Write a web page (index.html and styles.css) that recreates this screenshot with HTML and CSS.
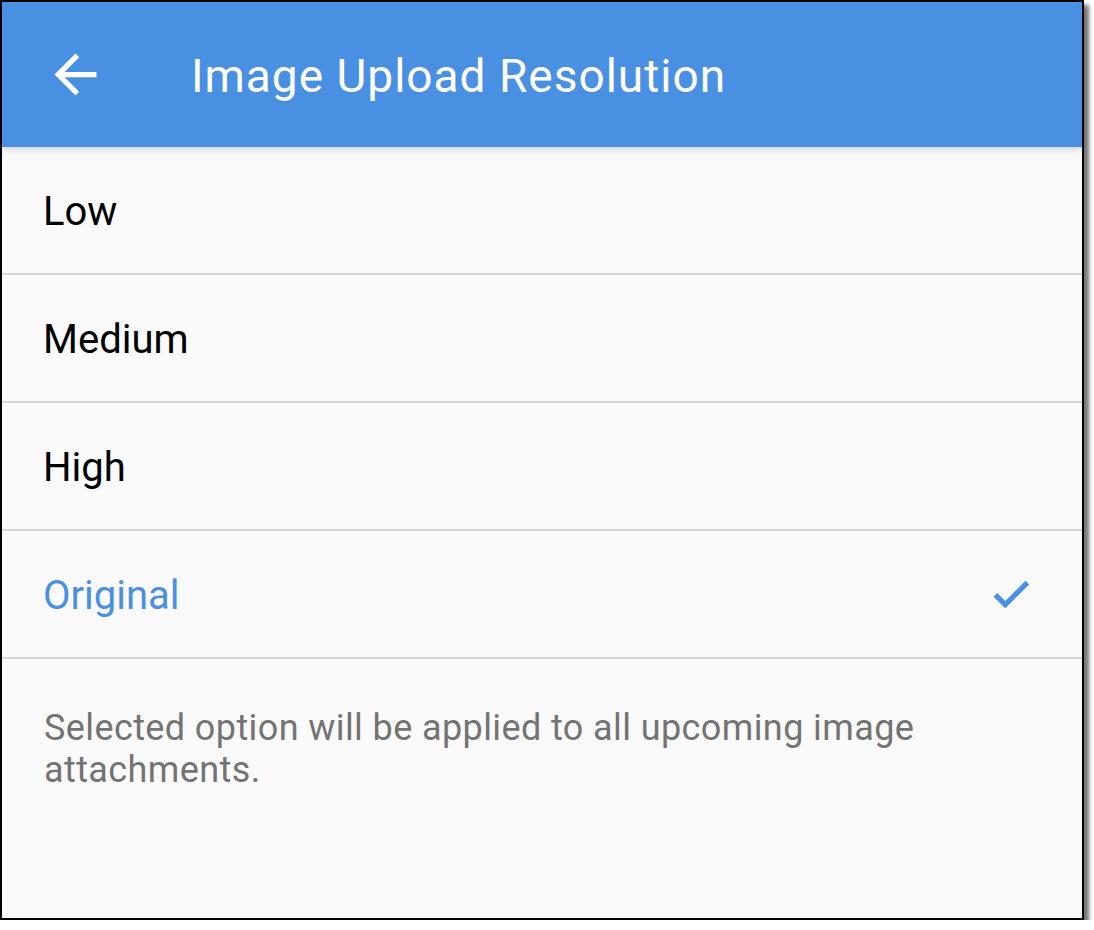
FILE: index.html
```html
<!DOCTYPE html>
<html>
<head>
<meta charset="utf-8">
<link rel="stylesheet" href="styles.css">
</head>
<body>
<div class="frame">
  <header class="appbar">
    <svg class="back" viewBox="0 0 24 24" width="63" height="63"><path fill="#fff" d="M20 11H7.83l5.59-5.59L12 4l-8 8 8 8 1.41-1.41L7.83 13H20v-2z"/></svg>
    <h1 class="title">Image Upload Resolution</h1>
  </header>
  <ul class="options">
    <li class="option">Low</li>
    <li class="option">Medium</li>
    <li class="option">High</li>
    <li class="option selected">Original
      <svg class="check" viewBox="0 0 24 24" width="46" height="46"><path fill="#4a90e2" stroke="#4a90e2" stroke-width="0.7" stroke-linejoin="miter" d="M9 16.17L4.83 12l-1.42 1.41L9 19 21 7l-1.41-1.41z"/></svg>
    </li>
  </ul>
  <p class="note">Selected option will be applied to all upcoming image attachments.</p>
</div>
</body>
</html>
```
FILE: styles.css
```css
html, body {
  margin: 0;
  padding: 0;
  background: #ffffff;
}
body {
  font-family: Roboto, "Noto Sans", sans-serif;
}
.frame {
  width: 1080px;
  height: 916px;
  border: 2px solid #000;
  background: #fafafa;
  box-shadow: 5px 5px 4px rgba(0,0,0,0.55);
  display: flex;
  flex-direction: column;
  overflow: hidden;
}
.appbar {
  height: 145px;
  flex: none;
  background: #4a90e2;
  display: flex;
  align-items: center;
  padding-left: 42px;
  box-shadow: 0 2px 7px rgba(0,0,0,0.18);
  position: relative;
  z-index: 1;
}
.back {
  display: block;
  flex: none;
}
.title {
  margin: 0 0 0 84px;
  color: #fff;
  font-weight: 400;
  font-size: 46px;
  letter-spacing: 1px;
  line-height: 1;
  padding-top: 3px;
}
.options {
  list-style: none;
  margin: 0;
  padding: 0;
}
.option {
  height: 126px;
  border-bottom: 2px solid #d6d6d6;
  display: flex;
  align-items: center;
  justify-content: space-between;
  padding: 3px 48px 0 41px;
  box-sizing: border-box;
  height: 128px;
  font-size: 40px;
  color: #000;
}
.option.selected {
  color: #4a90e2;
}
.check {
  display: block;
  margin-top: -3px;
}
.note {
  margin: 0;
  padding: 48px 40px 0 42px;
  font-size: 36px;
  letter-spacing: 0.4px;
  line-height: 42px;
  color: #737373;
}
```
